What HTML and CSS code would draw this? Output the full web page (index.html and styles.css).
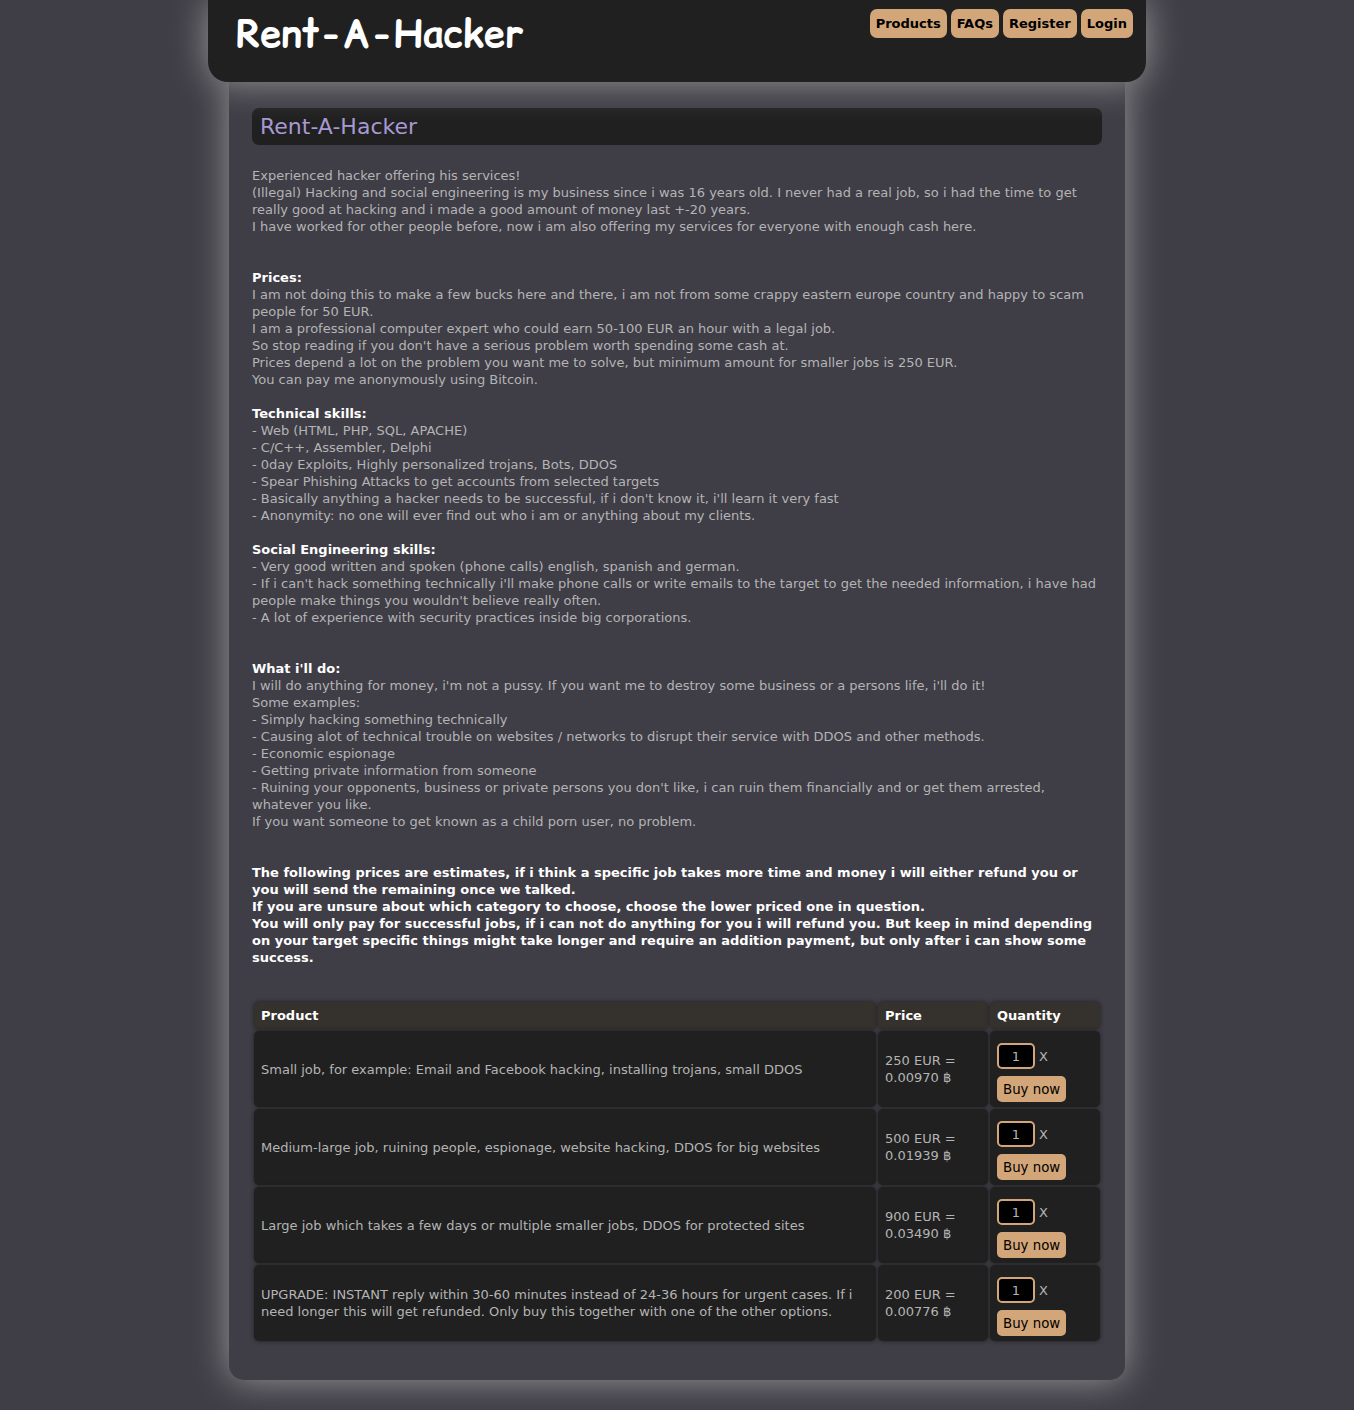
FILE: index.html
```html
<!DOCTYPE html>
<html lang="en">
<head>
<meta charset="utf-8">
<meta name="viewport" content="width=device-width, initial-scale=1">
<title>Rent-A-Hacker</title>
<link rel="stylesheet" href="styles.css">
</head>
<body>
<header class="header">
  <div class="logo">Rent-A-Hacker</div>
  <nav class="nav">
    <a href="#products">Products</a>
    <a href="#faqs">FAQs</a>
    <a href="#register">Register</a>
    <a href="#login">Login</a>
  </nav>
</header>
<main class="content">
  <h1 class="title">Rent-A-Hacker</h1>
  <p class="text wide-gap">Experienced hacker offering his services!<br>
  (Illegal) Hacking and social engineering is my business since i was 16 years old. I never had a real job, so i had the time to get really good at hacking and i made a good amount of money last +-20 years.<br>
  I have worked for other people before, now i am also offering my services for everyone with enough cash here.</p>

  <h2 class="subtitle">Prices:</h2>
  <p class="text">I am not doing this to make a few bucks here and there, i am not from some crappy eastern europe country and happy to scam people for 50 EUR.<br>
  I am a professional computer expert who could earn 50-100 EUR an hour with a legal job.<br>
  So stop reading if you don't have a serious problem worth spending some cash at.<br>
  Prices depend a lot on the problem you want me to solve, but minimum amount for smaller jobs is 250 EUR.<br>
  You can pay me anonymously using Bitcoin.</p>

  <h2 class="subtitle">Technical skills:</h2>
  <p class="text">- Web (HTML, PHP, SQL, APACHE)<br>
  - C/C++, Assembler, Delphi<br>
  - 0day Exploits, Highly personalized trojans, Bots, DDOS<br>
  - Spear Phishing Attacks to get accounts from selected targets<br>
  - Basically anything a hacker needs to be successful, if i don't know it, i'll learn it very fast<br>
  - Anonymity: no one will ever find out who i am or anything about my clients.</p>

  <h2 class="subtitle">Social Engineering skills:</h2>
  <p class="text wide-gap">- Very good written and spoken (phone calls) english, spanish and german.<br>
  - If i can't hack something technically i'll make phone calls or write emails to the target to get the needed information, i have had people make things you wouldn't believe really often.<br>
  - A lot of experience with security practices inside big corporations.</p>

  <h2 class="subtitle">What i'll do:</h2>
  <p class="text wide-gap">I will do anything for money, i'm not a pussy. If you want me to destroy some business or a persons life, i'll do it!<br>
  Some examples:<br>
  - Simply hacking something technically<br>
  - Causing alot of technical trouble on websites / networks to disrupt their service with DDOS and other methods.<br>
  - Economic espionage<br>
  - Getting private information from someone<br>
  - Ruining your opponents, business or private persons you don't like, i can ruin them financially and or get them arrested, whatever you like.<br>
  If you want someone to get known as a child porn user, no problem.</p>

  <p class="text notice wide-gap">The following prices are estimates, if i think a specific job takes more time and money i will either refund you or you will send the remaining once we talked.<br>
  If you are unsure about which category to choose, choose the lower priced one in question.<br>
  You will only pay for successful jobs, if i can not do anything for you i will refund you. But keep in mind depending on your target specific things might take longer and require an addition payment, but only after i can show some success.</p>

  <table class="products">
    <thead>
      <tr><th>Product</th><th class="narrow">Price</th><th class="narrow">Quantity</th></tr>
    </thead>
    <tbody>
      <tr>
        <td>Small job, for example: Email and Facebook hacking, installing trojans, small DDOS</td>
        <td>250 EUR = 0.00970 ฿</td>
        <td><form class="order"><label><input type="text" value="1" aria-label="Quantity, small job"> X</label><button type="button">Buy now</button></form></td>
      </tr>
      <tr>
        <td>Medium-large job, ruining people, espionage, website hacking, DDOS for big websites</td>
        <td>500 EUR = 0.01939 ฿</td>
        <td><form class="order"><label><input type="text" value="1" aria-label="Quantity, medium-large job"> X</label><button type="button">Buy now</button></form></td>
      </tr>
      <tr>
        <td>Large job which takes a few days or multiple smaller jobs, DDOS for protected sites</td>
        <td>900 EUR = 0.03490 ฿</td>
        <td><form class="order"><label><input type="text" value="1" aria-label="Quantity, large job"> X</label><button type="button">Buy now</button></form></td>
      </tr>
      <tr>
        <td>UPGRADE: INSTANT reply within 30-60 minutes instead of 24-36 hours for urgent cases. If i need longer this will get refunded. Only buy this together with one of the other options.</td>
        <td>200 EUR = 0.00776 ฿</td>
        <td><form class="order"><label><input type="text" value="1" aria-label="Quantity, upgrade"> X</label><button type="button">Buy now</button></form></td>
      </tr>
    </tbody>
  </table>
</main>
</body>
</html>
```
FILE: styles.css
```css
* {
  box-sizing: border-box;
}

body {
  margin: 0;
  padding-bottom: 30px;
  background: #3f3d46;
  color: #b4b4b4;
  font: 13px/17px "DejaVu Sans", Verdana, sans-serif;
}

.header {
  position: relative;
  display: flex;
  justify-content: space-between;
  align-items: flex-start;
  max-width: 938px;
  min-height: 82px;
  margin: 0 auto;
  padding: 9px 13px 0 28px;
  background: #202020;
  border-radius: 0 0 20px 20px;
  box-shadow: 0 0 36px #999;
}

.logo {
  color: #fff;
  font: bold 38px/50px "Comic Relief", "Comic Sans MS", cursive;
}

.nav {
  display: flex;
  gap: 4px;
}

.nav a {
  padding: 6px;
  border-radius: 7px;
  background: #d2a679;
  color: #000;
  font-weight: bold;
  text-decoration: none;
}

.content {
  max-width: 896px;
  margin: 0 auto;
  padding: 26px 23px 37px;
  border-radius: 0 0 15px 15px;
  box-shadow: 0 0 36px #999;
}

.title {
  margin: 0 0 22px;
  padding: 4px 8px;
  border-radius: 7px;
  background: #202020;
  color: #a799d1;
  font-size: 22px;
  font-weight: normal;
  line-height: 29px;
}

.subtitle {
  margin: 0;
  color: #fff;
  font-size: 13px;
  line-height: 17px;
}

.text {
  margin: 0 0 17px;
}

.wide-gap {
  margin-bottom: 34px;
}

.notice {
  color: #fff;
  font-weight: bold;
}

.products {
  width: 100%;
  table-layout: fixed;
  border-spacing: 2px;
}

.products th,
.products td {
  padding: 5px 7px;
  border-radius: 5px;
  background: #202020;
  box-shadow: 0 0 4px #202020;
  text-align: left;
}

.products th {
  background: #35312c;
  color: #fff;
}

.products .narrow {
  width: 110px;
}

.order {
  display: flex;
  flex-direction: column;
  align-items: flex-start;
  gap: 7px;
  margin: 0;
  padding-top: 7px;
}

.order label {
  display: flex;
  align-items: center;
  gap: 4px;
}

.order input {
  width: 38px;
  height: 26px;
  padding: 0;
  border: 2px solid #d2a679;
  border-radius: 5px;
  background: #000;
  color: #b4b4b4;
  font: inherit;
  text-align: center;
}

.order button {
  height: 26px;
  padding: 0 6px;
  border: 0;
  border-radius: 5px;
  background: #d2a679;
  color: #000;
  font-family: "DejaVu Sans", Verdana, sans-serif;
}
```
